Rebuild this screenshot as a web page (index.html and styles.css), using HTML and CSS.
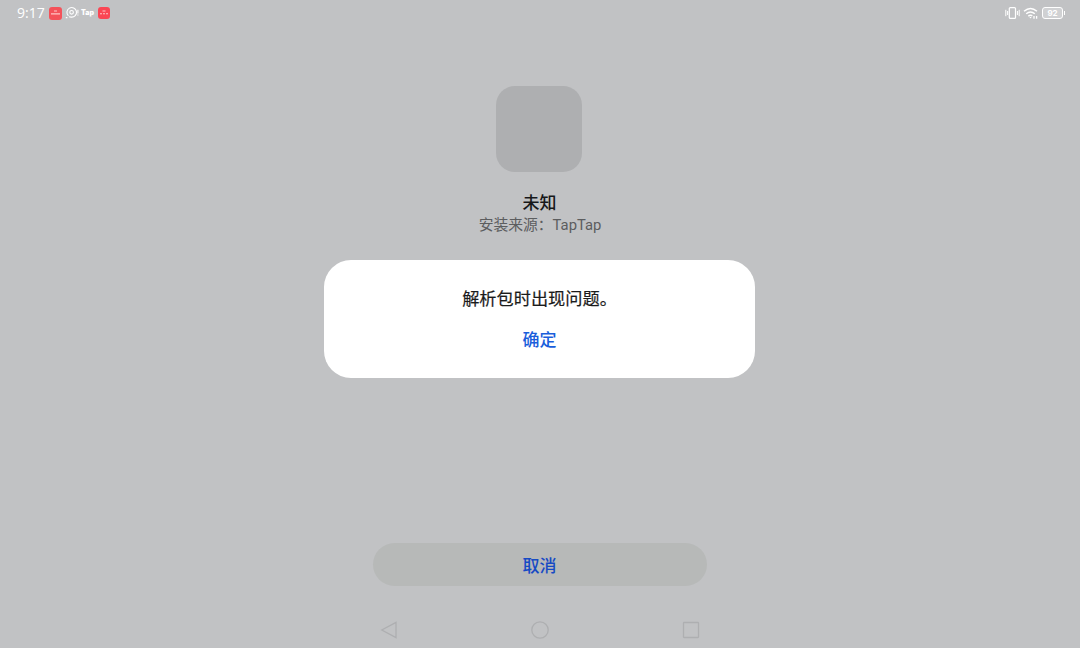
FILE: index.html
```html
<!DOCTYPE html>
<html lang="zh-CN">
<head>
    <meta charset="UTF-8">
    <meta name="viewport" content="width=device-width, initial-scale=1.0">
    <title>安装</title>
    <link rel="stylesheet" href="styles.css">
</head>
<body>
    <header class="status-bar">
        <div class="status-left">
            <span class="time">9:17</span>
            <svg class="notice" width="13" height="13" viewBox="0 0 13 13">
                <rect width="13" height="13" rx="3" fill="#f4525a"/>
                <path d="M5 4h3M2 6.8h9" stroke="#ffc5c5" stroke-width="1.2"/>
            </svg>
            <svg class="chat" width="14" height="14" viewBox="0 0 14 14" fill="none" stroke="#fff">
                <path d="M3.4 9.8A4.8 4.8 0 1 1 6.2 11.1L4 10.8" stroke-width="1.1"/>
                <circle cx="6.6" cy="6.3" r="1.8" stroke-width="1.1"/>
                <path d="M.8 11.6h1.6M12.9 3.8v3.6M12.9 8.5v1.1" stroke-width="1.1"/>
            </svg>
            <span class="tap-logo">Tap</span>
            <svg class="notice" width="12" height="12" viewBox="0 0 12 12">
                <rect width="12" height="12" rx="3" fill="#fa4654"/>
                <path d="M4.5 4h3M2 6.8h2M5 6.8h2M8 6.8h2" stroke="#ffc5c5" stroke-width="1.1"/>
            </svg>
        </div>
        <div class="status-right">
            <svg width="15" height="14" viewBox="0 0 15 14" fill="none" stroke="#fff" stroke-width="1.2">
                <rect x="4.3" y="1.6" width="6.2" height="10.8" rx="1"/>
                <path d="M.8 3.8v6.4M2.6 5v4M12.4 5v4M14.2 3.8v6.4" stroke-width="1"/>
            </svg>
            <svg width="16" height="14" viewBox="0 0 16 14" fill="none" stroke="#fff" stroke-width="1.4">
                <path d="M1 5.2Q7.5-.4 14 5.2M3.2 7.8Q7.5 4.2 11.8 7.8M5.3 10.1Q7.5 8.6 9.3 9.8"/>
                <path d="M6.4 11.1h2.2l-1.1 1.4z" fill="#fff" stroke="none"/>
                <path d="M11 10v2.7M13.6 10v2.7" stroke-width="1.3"/>
            </svg>
            <span class="battery">92</span>
        </div>
    </header>

    <main class="installer">
        <div class="app-icon"></div>
        <h1>未知</h1>
        <p class="source">安装来源：TapTap</p>
        <button class="cancel">取消</button>
    </main>

    <div class="dialog">
        <p>解析包时出现问题。</p>
        <button class="confirm">确定</button>
    </div>

    <nav class="nav-bar">
        <svg width="18" height="18" viewBox="0 0 18 18"><path d="M16 1.4v15.2L1.8 9z"/></svg>
        <svg width="18" height="18" viewBox="0 0 18 18"><circle cx="9" cy="9" r="8.2"/></svg>
        <svg width="18" height="18" viewBox="0 0 18 18"><rect x="1.5" y="1.5" width="15" height="15" rx=".5"/></svg>
    </nav>
</body>
</html>
```

FILE: styles.css
```css
* {
    box-sizing: border-box;
}

body {
    margin: 0;
    height: 648px;
    display: flex;
    flex-direction: column;
    background-color: #c1c2c4;
    font-family: Roboto, "Noto Sans CJK SC", sans-serif;
    overflow: hidden;
}

h1,
p {
    margin: 0;
}

button {
    padding: 0;
    border: none;
    background: none;
    font-family: inherit;
    font-size: 17px;
    font-weight: 500;
    cursor: pointer;
}

.status-bar {
    height: 26px;
    padding: 0 14px 0 17px;
    display: flex;
    justify-content: space-between;
    align-items: center;
    color: #fff;
}

.status-left,
.status-right {
    display: flex;
    align-items: center;
}

.time {
    width: 32px;
    font-family: "Open Sans", sans-serif;
    font-size: 14px;
    font-weight: 500;
    line-height: 28px;
}

.chat {
    margin-left: 3px;
}

.tap-logo {
    width: 17px;
    margin-left: 2px;
    font-family: Inter, sans-serif;
    font-size: 7px;
    font-weight: 900;
    line-height: 10px;
}

.status-right {
    gap: 3px;
}

.battery {
    position: relative;
    width: 21px;
    height: 12px;
    margin-right: 3px;
    border: 1px solid #fff;
    border-radius: 3px;
    background-color: rgba(255, 255, 255, 0.25);
    font-family: Inter, sans-serif;
    font-size: 8px;
    font-weight: 700;
    line-height: 10px;
    text-align: center;
}

.battery::after {
    content: "";
    position: absolute;
    top: 3px;
    right: -3px;
    width: 1px;
    height: 4px;
    background-color: #fff;
}

.installer {
    flex: 1;
    padding: 60px 0 26px;
    display: flex;
    flex-direction: column;
    align-items: center;
}

.app-icon {
    width: 86px;
    height: 86px;
    margin-right: 2px;
    border-radius: 19px;
    background-color: #aeafb1;
}

.installer h1 {
    margin-top: 19px;
    margin-right: 1px;
    color: #17181a;
    font-size: 17px;
    font-weight: 500;
    line-height: 24px;
}

.source {
    color: #5c5d5f;
    font-size: 14.8px;
    line-height: 21px;
}

.cancel {
    width: 334px;
    height: 43px;
    margin-top: auto;
    padding-right: 1px;
    border-radius: 22px;
    background-color: #b7b9b8;
    color: #164ac4;
}

.dialog {
    position: absolute;
    top: 260px;
    left: 324px;
    width: 431px;
    height: 118px;
    padding-top: 27px;
    display: flex;
    flex-direction: column;
    align-items: center;
    gap: 17px;
    border-radius: 27px;
    background-color: #fff;
}

.dialog p {
    color: #1b1b1b;
    font-size: 17.2px;
    line-height: 24px;
    -webkit-text-stroke: 0.2px #1b1b1b;
}

.confirm {
    color: #1a5edb;
    line-height: 24px;
}

.nav-bar {
    height: 36px;
    padding: 0 380px;
    display: flex;
    justify-content: space-between;
    align-items: center;
}

.nav-bar svg {
    fill: none;
    stroke: #aeafb1;
    stroke-width: 1.3;
}
```
